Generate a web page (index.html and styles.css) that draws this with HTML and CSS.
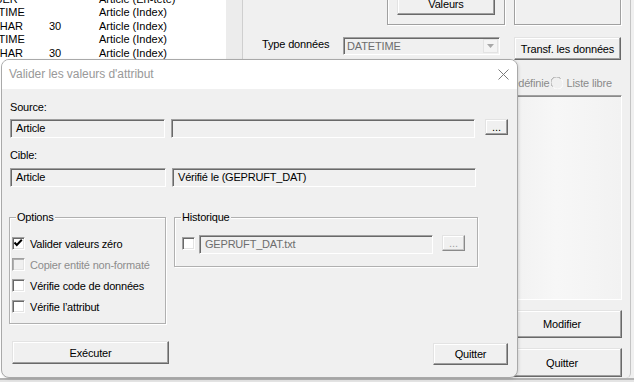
FILE: index.html
```html
<!DOCTYPE html>
<html>
<head>
<meta charset="utf-8">
<title>Valider les valeurs d'attribut</title>
<link rel="stylesheet" href="styles.css">
</head>
<body>
<div class="app">
  <div class="list">
    <div class="rows">
      <div class="row"><span class="c1">NUMBER</span><span class="c2"></span><span class="c3">Article (En-tête)</span></div>
      <div class="row"><span class="c1">DATETIME</span><span class="c2"></span><span class="c3">Article (Index)</span></div>
      <div class="row"><span class="c1">VARCHAR</span><span class="c2">30</span><span class="c3">Article (Index)</span></div>
      <div class="row"><span class="c1">DATETIME</span><span class="c2"></span><span class="c3">Article (Index)</span></div>
      <div class="row"><span class="c1">VARCHAR</span><span class="c2">30</span><span class="c3">Article (Index)</span></div>
    </div>
  </div>
  <div class="vscroll"></div>
  <div class="main">
    <div class="toprow">
      <div class="box boxa"><button class="btn valeurs">Valeurs</button></div>
      <div class="box boxb"></div>
    </div>
    <div class="typerow">
      <span class="typelabel">Type données</span>
      <div class="combo">
        <span class="combotext">DATETIME</span>
        <span class="drop"><svg width="7" height="4" viewBox="0 0 7 4"><path d="M0 0H7L3.5 4Z" fill="#a8a8a8"/></svg></span>
      </div>
      <button class="btn transf">Transf. les données</button>
    </div>
    <div class="radiorow">
      <span class="dis">Valeur prédéfinie</span>
      <svg class="radio" width="12" height="12" viewBox="0 0 12 12"><circle cx="6" cy="6" r="5" fill="#f0f0f0"/><path d="M1.5 9.5A5 5 0 0 1 9.5 1.5" stroke="#a0a0a0" fill="none"/><path d="M10.5 2.5A5 5 0 0 1 2.5 10.5" stroke="#fff" fill="none"/></svg>
      <span class="dis">Liste libre</span>
    </div>
    <div class="lower">
      <div class="panel"></div>
      <button class="btn side modif">Modifier</button>
      <button class="btn side quit">Quitter</button>
    </div>
  </div>
</div>

<div class="dialog">
  <div class="titlebar">
    <span class="title">Valider les valeurs d'attribut</span>
    <svg class="close" width="11" height="11" viewBox="0 0 11 11"><path d="M0.5 0.5L10.5 10.5M10.5 0.5L0.5 10.5" stroke="#7a7a7a" stroke-width="1"/></svg>
  </div>
  <div class="dbody">
    <div class="lbl first">Source:</div>
    <div class="frow r1">
      <div class="tb short">Article</div>
      <div class="tb long"></div>
      <button class="btn dots">...</button>
    </div>
    <div class="lbl">Cible:</div>
    <div class="frow r2">
      <div class="tb short">Article</div>
      <div class="tb long2">Vérifié le (GEPRUFT_DAT)</div>
    </div>
    <div class="groups">
      <div class="grp options">
        <span class="grptitle">Options</span>
        <div class="chk"><span class="cb"><svg width="11" height="11" viewBox="0 0 11 11"><path d="M1.5 4.5L3.8 7L8.8 1.8" stroke="#000" stroke-width="2" fill="none"/></svg></span><span>Valider valeurs zéro</span></div>
        <div class="chk disabled"><span class="cb"></span><span>Copier entité non-formaté</span></div>
        <div class="chk"><span class="cb"></span><span>Vérifie code de données</span></div>
        <div class="chk"><span class="cb"></span><span>Vérifie l’attribut</span></div>
      </div>
      <div class="grp histo">
        <span class="grptitle">Historique</span>
        <div class="hrow">
          <span class="cb"></span>
          <div class="tb file">GEPRUFT_DAT.txt</div>
          <button class="btn dots off">...</button>
        </div>
      </div>
    </div>
    <div class="actions">
      <button class="btn exec">Exécuter</button>
      <button class="btn dquit">Quitter</button>
    </div>
  </div>
</div>
</body>
</html>
```

FILE: styles.css
```css
html, body {
  margin: 0;
  padding: 0;
}
body {
  width: 634px;
  height: 382px;
  overflow: hidden;
  background: #e4e4e4;
  font-family: "Liberation Sans", Arial, sans-serif;
  font-size: 11px;
  color: #000;
  position: relative;
}

.app {
  display: flex;
  height: 378px;
  border-bottom: 2px solid #b3b3b3;
  background: #f0f0f0;
  overflow: hidden;
}

.list {
  width: 226px;
  background: #fff;
  overflow: hidden;
}
.rows {
  margin-top: -7px;
}
.row {
  display: flex;
  height: 13.4px;
  line-height: 13.4px;
  white-space: nowrap;
}
.c1 {
  width: 79px;
  margin-left: -30px;
  flex: none;
}
.c2 {
  width: 50px;
  flex: none;
}

.vscroll {
  width: 16px;
  background: #ececec;
  border-right: 1px solid #cfcfcf;
}

.main {
  flex: 1;
  margin-right: 3px;
  border-right: 1px solid #c4c4c4;
  border-bottom-right-radius: 5px;
  display: flex;
  flex-direction: column;
  letter-spacing: -0.15px;
}

.btn {
  font: inherit;
  letter-spacing: inherit;
  color: #000;
  background: #f0f0f0;
  padding: 0;
  box-sizing: border-box;
  border: 1px solid;
  border-color: #e3e3e3 #696969 #696969 #e3e3e3;
  box-shadow: inset -1px -1px 0 #a0a0a0, inset 1px 1px 0 #fff;
}

.toprow {
  display: flex;
  margin-top: -16px;
  padding-left: 144px;
  gap: 9px;
}
.box {
  height: 41px;
  box-sizing: border-box;
  border: 1px solid #a0a0a0;
  box-shadow: inset 1px 1px 0 #fff, 1px 1px 0 #fff;
}
.boxa {
  width: 118px;
  padding: 7px 0 0 9px;
}
.boxb {
  width: 107px;
}
.valeurs {
  width: 98px;
  height: 23px;
}

.typerow {
  display: flex;
  align-items: flex-start;
  margin-top: 12px;
  padding-left: 19px;
}
.typelabel {
  width: 81px;
  line-height: 14px;
}
.combo {
  width: 157px;
  height: 18px;
  box-sizing: border-box;
  border: 1px solid;
  border-color: #a0a0a0 #fff #fff #a0a0a0;
  box-shadow: inset 1px 1px 0 #696969;
  display: flex;
  align-items: center;
  justify-content: space-between;
  padding: 0 1px 0 3px;
}
.combotext {
  color: #6d6d6d;
  line-height: 15px;
}
.drop {
  width: 15px;
  height: 14px;
  box-sizing: border-box;
  border: 1px solid #e3e3e3;
  background: #f4f4f4;
  display: flex;
  align-items: center;
  justify-content: center;
}
.transf {
  width: 107px;
  height: 23px;
  margin-left: 14px;
}

.radiorow {
  display: flex;
  justify-content: flex-end;
  align-items: center;
  margin-top: 16px;
  height: 14px;
  padding-right: 18px;
  white-space: nowrap;
}
.dis {
  color: #8a8a8a;
}
.radio {
  margin: 0 4px 0 1px;
}

.lower {
  display: flex;
  flex-direction: column;
  align-items: flex-end;
  padding-right: 8px;
  margin-top: 5px;
}
.panel {
  width: 120px;
  height: 205px;
  box-sizing: border-box;
  border: 1px solid;
  border-color: #a0a0a0 #fff #fff #a0a0a0;
  box-shadow: inset 1px 1px 0 #8a8a8a;
  background: linear-gradient(to right, #f0f0f0, #f7f7f7 45%, #f2f2f2);
}
.side {
  width: 120px;
}
.modif {
  height: 28px;
  margin-top: 10px;
}
.quit {
  height: 29px;
  margin-top: 10px;
}

/* Dialog (window over the background window) */
.dialog {
  position: absolute;
  left: 1px;
  top: 59px;
  width: 517px;
  height: 319px;
  box-sizing: border-box;
  border: 1px solid #a9a9a9;
  border-radius: 8px;
  background: #f0f0f0;
  overflow: hidden;
  box-shadow: 1px 1px 3px rgba(0, 0, 0, 0.12);
}
.titlebar {
  height: 29px;
  background: #fff;
  display: flex;
  align-items: center;
  justify-content: space-between;
  padding: 0 7px 1px 7px;
  box-sizing: border-box;
}
.title {
  font-size: 12px;
  color: #999;
  letter-spacing: -0.05px;
}
.close {
  margin-right: 1px;
}

.dbody {
  padding: 0 9px 0 8px;
  letter-spacing: -0.2px;
}
.lbl {
  line-height: 14px;
  margin-top: 10px;
}
.lbl.first {
  margin-top: 11px;
}
.frow {
  display: flex;
  align-items: flex-start;
}
.r1 {
  margin-top: 5px;
}
.r2 {
  margin-top: 6px;
}
.tb {
  height: 19px;
  box-sizing: border-box;
  border: 1px solid;
  border-color: #a0a0a0 #fff #fff #a0a0a0;
  box-shadow: inset 1px 1px 0 #696969;
  background: #f0f0f0;
  padding-left: 5px;
  line-height: 17px;
  white-space: nowrap;
  overflow: hidden;
}
.short {
  width: 156px;
}
.long {
  width: 305px;
  margin-left: 6px;
}
.long2 {
  width: 304px;
  margin-left: 6px;
}
.dots {
  width: 23px;
  height: 16px;
  margin-left: 10px;
  line-height: 12px;
  letter-spacing: 0;
}
.dots.off {
  color: #a0a0a0;
  margin-left: 9px;
  border-color: #e3e3e3 #8a8a8a #8a8a8a #e3e3e3;
  box-shadow: inset -1px -1px 0 #c8c8c8, inset 1px 1px 0 #fff;
}

.groups {
  display: flex;
  align-items: flex-start;
  gap: 8px;
  margin-top: 30px;
  margin-left: -1px;
}
.grp {
  position: relative;
  box-sizing: border-box;
  border: 1px solid #b0b0b0;
  box-shadow: inset 1px 1px 0 #fff, 1px 1px 0 #fff;
}
.grptitle {
  position: absolute;
  top: -8px;
  left: 6px;
  padding: 0 1px;
  line-height: 14px;
  background: #f0f0f0;
}
.options {
  width: 157px;
  height: 107px;
  padding: 15px 0 0 2px;
}
.chk {
  display: flex;
  align-items: center;
  height: 21px;
  gap: 5px;
  white-space: nowrap;
}
.cb {
  width: 13px;
  height: 13px;
  box-sizing: border-box;
  border: 1px solid;
  border-color: #a0a0a0 #fff #fff #a0a0a0;
  box-shadow: inset 1px 1px 0 #696969, inset -1px -1px 0 #e3e3e3;
  background: #fff;
  flex: none;
  display: block;
}
.cb svg {
  display: block;
}
.chk.disabled {
  color: #8d8d8d;
}
.chk.disabled .cb {
  background: #f0f0f0;
  box-shadow: inset 1px 1px 0 #b0b0b0, inset -1px -1px 0 #e3e3e3;
}

.histo {
  width: 304px;
  height: 50px;
  padding: 17px 0 0 7px;
}
.hrow {
  display: flex;
  align-items: flex-start;
}
.hrow .cb {
  margin-top: 2px;
}
.file {
  width: 234px;
  margin-left: 4px;
  color: #6d6d6d;
}

.actions {
  display: flex;
  justify-content: space-between;
  align-items: flex-start;
  margin-top: 17px;
  padding-left: 2px;
}
.exec {
  width: 157px;
  height: 23px;
}
.dquit {
  width: 75px;
  height: 22px;
  margin-top: 2px;
}
```
